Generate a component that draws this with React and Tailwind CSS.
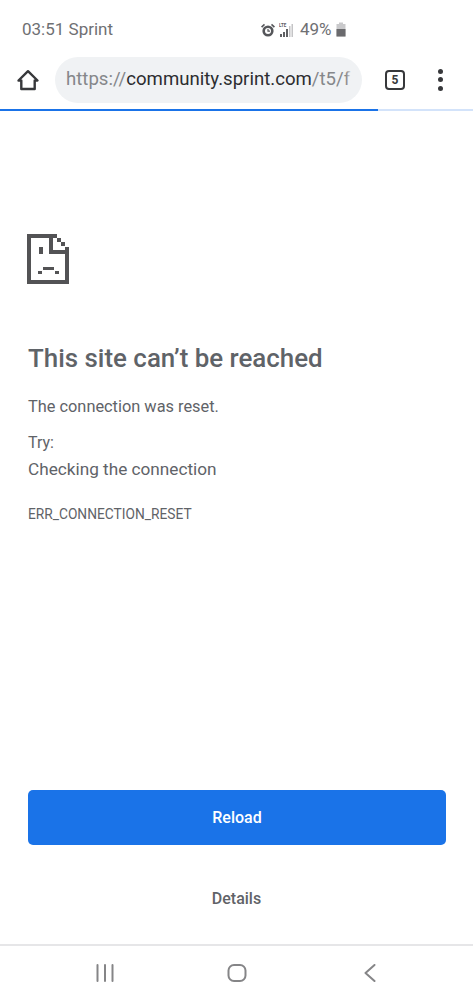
function StatusBar() {
  return (
    <div className="h-[52px] pt-[7px] pl-[22px] flex items-center text-[#6f7073] text-[17px]">
      <span className="w-[238px]">03:51 Sprint</span>
      <svg width="16" height="16" viewBox="0 0 16 16" className="mr-[3px]">
        <circle cx="8" cy="9" r="5.6" fill="#55565a" />
        <circle cx="8" cy="9" r="3" fill="#fff" />
        <path d="M8 7V9.2H10" stroke="#55565a" strokeWidth="1.2" fill="none" />
        <path d="M1 4.5 4 1.8 5 3 2.2 5.8ZM15 4.5 12 1.8 11 3 13.8 5.8Z" fill="#55565a" />
      </svg>
      <svg width="14" height="16" viewBox="0 0 14 16" className="mr-[7px]">
        <text x="0" y="4.5" fontSize="4.5" fontWeight="700" fill="#5f6063" fontFamily="Roboto, sans-serif">LTE</text>
        <rect x="1" y="12" width="2" height="3" fill="#5f6063" />
        <rect x="4" y="10" width="2" height="5" fill="#5f6063" />
        <rect x="7" y="7" width="2" height="8" fill="#5f6063" />
        <rect x="10" y="4" width="1.5" height="11" fill="#c4c4c6" />
        <rect x="12.5" y="2" width="1.5" height="13" fill="#c4c4c6" />
      </svg>
      <span>49%</span>
      <svg width="10" height="15" viewBox="0 0 10 15" className="ml-[4px]">
        <path d="M3 0.5H7V2H9.5V14.5H0.5V2H3Z" fill="#c9c9cb" />
        <rect x="0.5" y="7" width="9" height="7.5" fill="#6a6a6d" />
      </svg>
    </div>
  );
}

function UrlBar() {
  return (
    <div className="h-[57px] pb-[2px] pl-[16px] flex items-center">
      <svg width="24" height="24" viewBox="0 0 24 24" fill="none" stroke="#37383b" strokeWidth="2.4" strokeLinejoin="round">
        <path d="M2.5 12.5 12 3.2 21.5 12.5H18.7V21H5.3V12.5Z" />
      </svg>
      <div className="relative ml-[15px] w-[307px] h-[46px] rounded-full bg-[#f0f2f4] pl-[11px] flex items-center overflow-hidden text-[18.6px] whitespace-nowrap">
        <span className="text-[#85878a]">https://</span>
        <span className="text-[#2c2d30]">community.sprint.com</span>
        <span className="text-[#85878a]">/t5/f</span>
        <div className="absolute right-[10px] top-0 h-full w-[6px] bg-gradient-to-r from-transparent to-[#f0f2f4]" />
      </div>
      <div className="ml-[23px] w-[20px] h-[20px] border-2 border-[#37383b] rounded-[4px] flex items-center justify-center text-[12px] font-bold text-[#37383b]">
        5
      </div>
      <div className="ml-[33px] flex flex-col gap-[3.5px]">
        <span className="w-[5px] h-[5px] rounded-full bg-[#37383b]" />
        <span className="w-[5px] h-[5px] rounded-full bg-[#37383b]" />
        <span className="w-[5px] h-[5px] rounded-full bg-[#37383b]" />
      </div>
    </div>
  );
}

function SadFace() {
  return (
    <svg width="42" height="50" viewBox="0 0 42 50" fill="#535355" shapeRendering="crispEdges" className="-ml-[1px]">
      <path d="M0 0H30V4H4V46H38V13H42V50H0Z" />
      <path d="M22 4H26V16H38V20H22Z" />
      <rect x="30" y="4" width="4" height="4" />
      <rect x="34" y="8" width="4" height="4" />
      <rect x="12" y="13" width="4" height="7" />
      <rect x="16" y="33" width="11" height="3" />
      <rect x="11" y="37" width="4" height="3" />
      <rect x="28" y="37" width="4" height="3" />
    </svg>
  );
}

export default function App() {
  return (
    <div className="w-[473px] h-[999px] bg-white flex flex-col font-['Roboto',sans-serif] overflow-hidden">
      <StatusBar />
      <UrlBar />
      <div className="h-[2px] bg-[#d3e3fa]">
        <div className="h-full w-[378px] bg-[#1a73e8]" />
      </div>

      <div className="flex-1 flex flex-col px-[28px] pt-[123px] text-[#5f6368]">
        <SadFace />
        <h1 className="mt-[58px] text-[25.9px] leading-[32px] font-medium">This site can’t be reached</h1>
        <p className="mt-[21px] text-[16.35px] leading-[24px]">The connection was reset.</p>
        <p className="mt-[12px] text-[16px] leading-[24px]">Try:</p>
        <p className="mt-[2px] text-[17.2px] leading-[24px]">Checking the connection</p>
        <p className="mt-[23px] text-[13.75px] leading-[20px]">ERR_CONNECTION_RESET</p>

        <button className="mt-auto h-[55px] w-[418px] rounded-[5px] bg-[#1a73e8] text-white text-[16px] font-medium">
          Reload
        </button>
        <button className="mt-[42px] mb-[33px] h-[24px] text-[16px] font-medium text-[#5f6368]">
          Details
        </button>
      </div>

      <div className="h-[55px] shrink-0 border-t-2 border-[#e6e6e8] flex items-center">
        <div className="w-[210px] flex justify-center">
          <svg width="18" height="18" viewBox="0 0 18 18" stroke="#858587" strokeWidth="2" strokeLinecap="round">
            <path d="M1.5 1V17M9 1V17M16.5 1V17" />
          </svg>
        </div>
        <div className="w-[56px] flex justify-center">
          <svg width="20" height="18" viewBox="0 0 20 18" fill="none" stroke="#858587" strokeWidth="2" className="-translate-x-[1px]">
            <rect x="1.5" y="1" width="17" height="16" rx="5.5" />
          </svg>
        </div>
        <div className="ml-[74px] w-[60px] flex justify-center">
          <svg width="12" height="18" viewBox="0 0 12 18" fill="none" stroke="#858587" strokeWidth="2" strokeLinecap="round" strokeLinejoin="round">
            <path d="M10.5 1 1.5 9 10.5 17" />
          </svg>
        </div>
      </div>
    </div>
  );
}
